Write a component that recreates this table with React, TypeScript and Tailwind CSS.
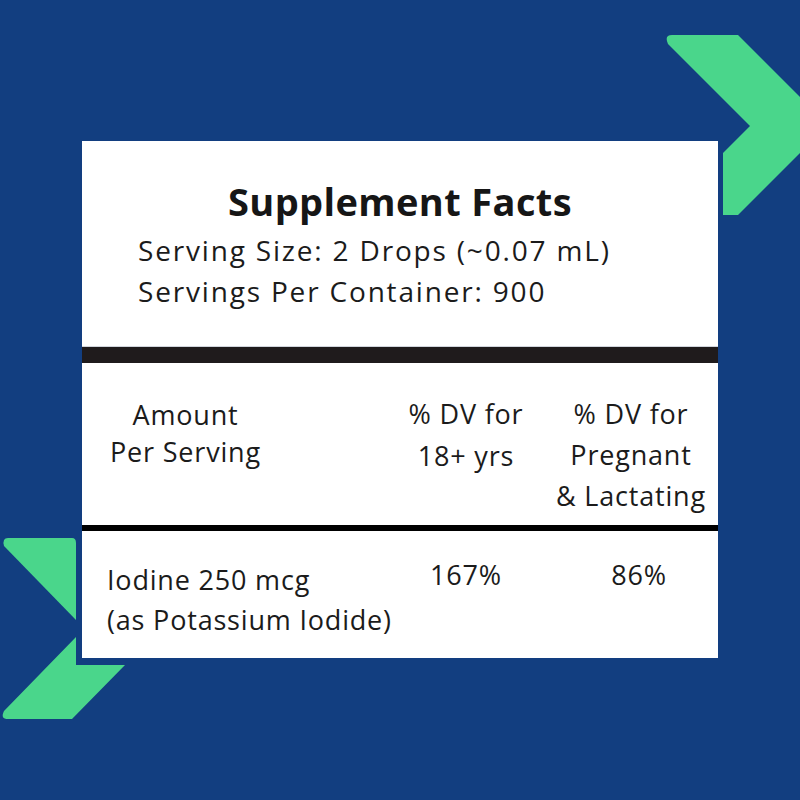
import React from 'react'

const font = { fontFamily: '"Open Sans", "Noto Sans", sans-serif' }

const Chevrons = () => (
  <svg className="absolute inset-0" width="800" height="800" viewBox="0 0 800 800">
    {/* top right chevron */}
    <path
      d="M672 35 L738 35 L800 97 L800 153 L738 215 L723 215 L723 153 L750 126 L668 44 Q664 35 672 35 Z"
      fill="#4ad68b"
    />
    {/* bottom left chevron, upper half */}
    <path d="M8 538 L72 538 Q76 538 76 543 L76 620 L4 546 Q2 538 8 538 Z" fill="#4ad68b" />
    {/* bottom left chevron, lower half */}
    <path d="M76 637 L76 665 L125 665 L72 719 L8 719 Q0 719 4 711 Z" fill="#4ad68b" />
  </svg>
)

export default function App() {
  return (
    <div className="relative h-[800px] w-[800px] overflow-hidden bg-[#123e80]" style={font}>
      <Chevrons />
      <div className="relative pl-[82px] pt-[141px]">
        <div className="flex h-[517px] w-[636px] flex-col bg-white text-[#1b1b1b]">
          <div className="h-[205px] pt-[37px]">
            <h1 className="text-center text-[38px] font-bold leading-[46px] tracking-[0.01em] text-[#161616]">Supplement Facts</h1>
            <div className="mt-[6px] pl-[56px] text-[28px] leading-[41px] tracking-[0.065em]">
              <p>Serving Size: 2 Drops (~0.07 mL)</p>
              <p>Servings Per Container: 900</p>
            </div>
          </div>
          <div className="h-[17px] border-t border-gray-300 bg-[#1f1b1c]" />
          <div className="flex h-[162px] whitespace-nowrap text-[27px] tracking-[0.03em]">
            <div className="w-[290px] pl-[25px] pt-[33px] leading-[37px]">
              <div className="w-[157px] text-center">Amount</div>
              <div className="w-[157px] text-center">Per Serving</div>
            </div>
            <div className="flex w-[188px] flex-col items-center pt-[30px] leading-[42px]">
              <div>% DV for</div>
              <div>18+ yrs</div>
            </div>
            <div className="flex w-[142px] flex-col items-center pt-[30px] leading-[41px]">
              <div>% DV for</div>
              <div>Pregnant</div>
              <div>&amp; Lactating</div>
            </div>
          </div>
          <div className="h-[6px] bg-black" />
          <div className="flex flex-1 whitespace-nowrap text-[27px] tracking-[0.03em]">
            <div className="w-[290px] pl-[25px] pt-[29px] leading-[40px]">
              <div>Iodine 250 mcg</div>
              <div>(as Potassium Iodide)</div>
            </div>
            <div className="w-[188px] pt-[24px] text-center leading-[40px]">167%</div>
            <div className="w-[158px] pt-[24px] text-center leading-[40px]">86%</div>
          </div>
        </div>
      </div>
    </div>
  )
}
